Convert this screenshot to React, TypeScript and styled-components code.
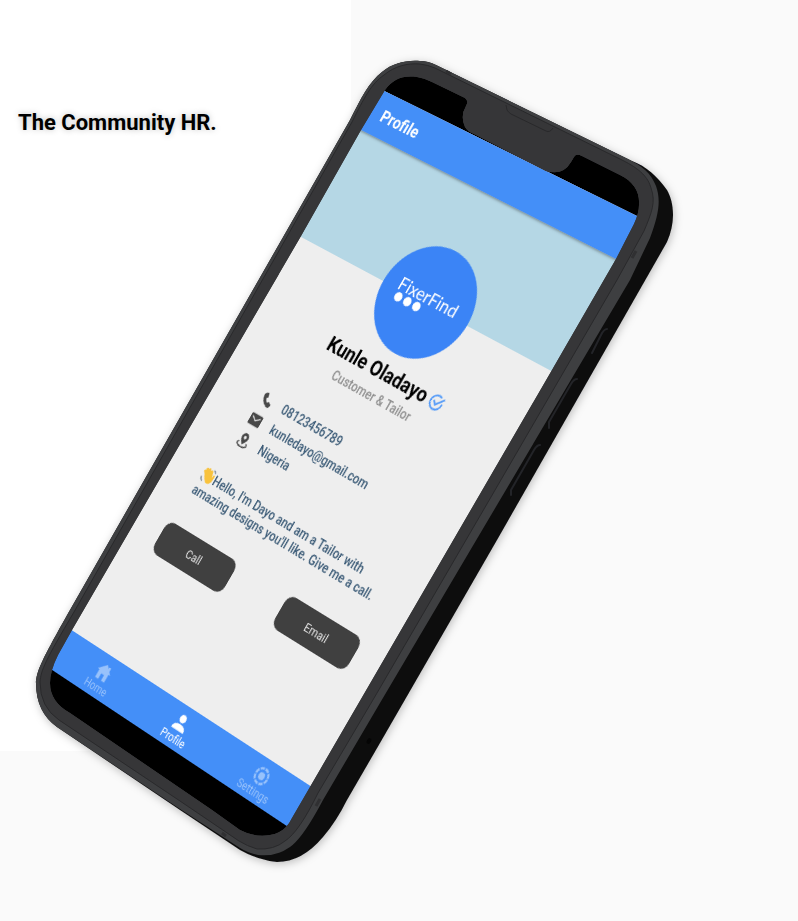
import React from "react";
import styled, { createGlobalStyle } from "styled-components";

type Point = [number, number];

const SCREEN_WIDTH = 366;
const EDGE = 10;
const HEADER_HEIGHT = 47;
const CONTENT_HEIGHT = 600;
const NAV_HEIGHT = 46;
const SCENE = { left: 24, top: 49, width: 664, height: 828 };

/* Projects a flat width x height rectangle onto four corners (clockwise from the
   top left); offsetY is the height of whatever sits above that rectangle. */
function project(width: number, height: number, offsetY: number, corners: Point[]): string {
  const [[x0, y0], [x1, y1], [x2, y2], [x3, y3]] = corners;
  const sx = x0 - x1 + x2 - x3;
  const sy = y0 - y1 + y2 - y3;
  const dx1 = x1 - x2;
  const dy1 = y1 - y2;
  const dx2 = x3 - x2;
  const dy2 = y3 - y2;
  const det = dx1 * dy2 - dx2 * dy1;
  const g = (sx * dy2 - dx2 * sy) / det;
  const h = (dx1 * sy - sx * dy1) / det;
  const a = (x1 - x0 + g * x1) / width;
  const d = (y1 - y0 + g * y1) / width;
  const b = (x3 - x0 + h * x3) / height;
  const e = (y3 - y0 + h * y3) / height;
  const m = [a, d, 0, g / width, b, e, 0, h / height, 0, 0, 1, 0, x0, y0, 0, 1];
  return `matrix3d(${m.map((v) => v.toFixed(8)).join(",")}) translateY(${-offsetY}px)`;
}

const toScene = ([x, y]: Point): Point => [x - SCENE.left, y - SCENE.top];

const perspective = project(
  SCREEN_WIDTH,
  CONTENT_HEIGHT,
  HEADER_HEIGHT + EDGE,
  ([[359, 129], [618, 260], [312, 787], [70, 629]] as Point[]).map(toScene)
);

const GlobalStyle = createGlobalStyle`
  *, *::before, *::after { box-sizing: border-box; }
  body {
    margin: 0;
    background: #fafafa;
    font-family: Roboto, "Liberation Sans", sans-serif;
  }
`;

const Page = styled.main`
  display: grid;
  grid-template-columns: 44fr 56fr;
  min-height: 100vh;
  overflow: hidden;
`;

const Intro = styled.section`
  grid-area: 1 / 1;
  align-self: start;
  min-height: 751px;
  padding: 108px 18px;
  background: #fff;
`;

const Title = styled.h1`
  margin: 0;
  font-size: 22px;
  line-height: 30px;
  font-weight: 700;
  color: #000;
  white-space: nowrap;
  text-shadow: 0 0 6px rgba(0, 0, 0, 0.25);
`;

const Scene = styled.div`
  grid-area: 1 / 1 / 2 / 3;
  position: relative;
  width: ${SCENE.width}px;
  height: ${SCENE.height}px;
  margin: ${SCENE.top}px 0 0 ${SCENE.left}px;
  pointer-events: none;
`;

const Layer = styled.svg`
  position: absolute;
  inset: 0;
  width: 100%;
  height: 100%;
`;

const Screen = styled.div`
  position: absolute;
  top: 0;
  left: 0;
  width: ${SCREEN_WIDTH}px;
  display: grid;
  grid-template-rows: ${HEADER_HEIGHT}px ${CONTENT_HEIGHT}px ${NAV_HEIGHT}px;
  border: solid #000;
  border-width: ${EDGE}px 0;
  transform-origin: 0 0;
  transform: ${perspective};
  background: #eee;
  pointer-events: auto;
`;

const AppBar = styled.header`
  z-index: 1;
  display: flex;
  align-items: center;
  padding: 0 17px;
  background: #448ff8;
  box-shadow: 0 1px 3px rgba(0, 0, 0, 0.4);
`;

const AppTitle = styled.h2`
  margin: 0;
  font-size: 18px;
  line-height: 24px;
  font-weight: 700;
  color: #fff;
`;

const Content = styled.section`
  display: flex;
  flex-direction: column;
  align-items: center;
  padding-left: 8px;
  background: linear-gradient(#b5d7e5 127px, #eee 127px);
`;

const Avatar = styled.div`
  display: flex;
  flex-direction: column;
  align-items: center;
  width: 120px;
  height: 120px;
  margin-top: 66px;
  padding-top: 43px;
  border-radius: 50%;
  background: #3b84f6;
`;

const Wordmark = styled.span`
  font-family: Lato, sans-serif;
  font-size: 20px;
  line-height: 20px;
  color: #fff;
`;

const Dots = styled.svg`
  width: 80px;
  height: 12px;
`;

const NameRow = styled.div`
  display: flex;
  align-items: center;
  gap: 4px;
  margin-top: 9px;
  padding-left: 4px;
`;

const Name = styled.h3`
  margin: 0;
  font-size: 22px;
  line-height: 28px;
  font-weight: 700;
  color: #000;
`;

const Role = styled.p`
  margin: 2px 0 0;
  font-size: 14px;
  line-height: 20px;
  font-weight: 500;
  color: #8e8e8e;
`;

const Contacts = styled.ul`
  align-self: stretch;
  list-style: none;
  margin: 34px 0 0;
  padding: 0 0 0 58px;
`;

const Contact = styled.li`
  display: flex;
  align-items: center;
  gap: 15px;
  height: 24px;
  font-size: 14px;
  font-weight: 500;
  color: #3a5a76;
`;

const ContactLink = styled.a`
  color: inherit;
  text-decoration: none;
`;

const Icon = styled.svg<{ $size: number }>`
  flex: none;
  width: ${(p) => p.$size}px;
  height: ${(p) => p.$size}px;
`;

const Bio = styled.p`
  align-self: flex-start;
  width: 290px;
  margin: 29px 0 0 40px;
  font-size: 14px;
  line-height: 18px;
  font-weight: 500;
  color: #3a5a76;
`;

const Wave = styled.svg`
  width: 18px;
  height: 18px;
  vertical-align: -3px;
`;

const Actions = styled.div`
  display: flex;
  gap: 75px;
  margin-top: 32px;
  padding-right: 4px;
`;

const Action = styled.button`
  width: 107px;
  height: 38px;
  border: 0;
  border-radius: 10px;
  background: #404040;
  font: 400 13px Roboto, sans-serif;
  color: #e4e4e4;
`;

const TabBar = styled.nav`
  display: grid;
  grid-template-columns: repeat(3, 1fr);
  padding-left: 8px;
  background: #448ff8;
`;

const Tab = styled.a<{ $active?: boolean }>`
  display: flex;
  flex-direction: column;
  align-items: center;
  padding-top: 8px;
  font-size: 12px;
  line-height: 14px;
  text-decoration: none;
  color: ${(p) => (p.$active ? "#fff" : "#98c2fb")};
`;

const BODY =
  "M350 120 C361 98 369 82 382 72 C393 63 406 60 420 61 Q428 61 436 65 L632 161 C646 166 658 177 667 190 C674 202 676 222 667 242 L497 540 L380 743 L347 800 Q336 822 323 837 Q302 862 277 862 Q258 860 240 850 L180 810 L57 727 Q36 712 36 683 C37 671 40 663 70 610 Z";
const FACE =
  "M350 120 C361 98 369 82 382 72 C393 63 406 60 420 61 Q428 61 436 65 L628 159 C642 166 651 173 656 186 C661 200 659 214 650 238 L630 280 L497 505 L380 703 L323 800 Q303 838 290 847 Q276 857 258 855 Q248 853 240 848 L180 809 L57 727 Q36 712 36 683 C37 671 40 663 70 610 Z";
const SEAM =
  "M352 122 C364 98 371 84 384 75 C395 66 407 63 420 64 Q428 65 435 68 L622 160 C640 169 648 177 651 188 C656 202 652 212 644 231 L617 280 L491 497 L377 693 L318 793 Q299 832 285 841 Q274 850 257 849 Q247 846 239 841 L180 801 L59 720 Q40 707 40 682 C41 670 45 661 74 612 Z";
const GLASS =
  "M361 130 L385 90 C393 79 403 75 417 77 Q424 78 432 82 L465 98 Q469 101 466 106 Q460 116 465 127 Q468 132 474 134 L546 171 Q563 176 571 162 L574 157 Q576 153 582 156 L620 175 C634 182 640 192 639 205 Q639 213 634 224 L616 259 L552 370 L310 787 L292 818 Q285 833 270 835 Q256 838 240 830 L212 810 L70 713 Q50 702 50 683 Q50 671 58 655 L72 630 L301 236 Z";

function PhoneBody() {
  return (
    <Layer viewBox={`${SCENE.left} ${SCENE.top} ${SCENE.width} ${SCENE.height}`} aria-hidden>
      <defs>
        <filter id="soft" x="-10%" y="-10%" width="120%" height="120%">
          <feDropShadow dx="1" dy="2" stdDeviation="4" floodColor="#000" floodOpacity="0.25" />
        </filter>
      </defs>
      <path d={BODY} fill="#0c0c0d" filter="url(#soft)" />
      <path d={GLASS} fill="#000" />
      <g stroke="#232428" strokeWidth="2" strokeLinecap="round" fill="none">
        <path d="M607 329 Q604 329 601 335 L592 353" />
        <path d="M577 379 Q574 379 571 384 L549 422 V428" />
        <path d="M540 445 Q537 445 534 450 L511 490 V495" />
      </g>
      <ellipse cx="369" cy="741" rx="2" ry="3" fill="#050505" transform="rotate(30 369 741)" />
    </Layer>
  );
}

function PhoneBezel() {
  return (
    <Layer viewBox={`${SCENE.left} ${SCENE.top} ${SCENE.width} ${SCENE.height}`} aria-hidden>
      <path d={`${FACE} ${GLASS}`} fill="#3e3f41" fillRule="evenodd" />
      <path d={`${SEAM} ${GLASS}`} fill="#363638" fillRule="evenodd" />
      <path d={SEAM} fill="none" stroke="#29292b" strokeWidth="1" />
      <path d="M506 105 L507 110 Q508 112 511 114 L546 131 Q550 133 553 128" fill="none" stroke="#29292b" />
      <path d="M446 71 l5 3 M636 251 l-4 7 M320 799 l-4 7 M222 833 l4 3" stroke="#303032" strokeWidth="3" />
    </Layer>
  );
}

export default function App() {
  return (
    <>
      <GlobalStyle />
      <Page>
        <Intro>
          <Title>The Community HR.</Title>
        </Intro>
        <Scene>
          <PhoneBody />
          <Screen>
            <AppBar>
              <AppTitle>Profile</AppTitle>
            </AppBar>
            <Content>
              <Avatar>
                <Wordmark>FixerFind</Wordmark>
                <Dots viewBox="0 0 80 12" fill="#fff" aria-hidden>
                  <circle cx="7" cy="5" r="5" />
                  <circle cx="20" cy="5" r="5" />
                  <circle cx="33" cy="5" r="5" />
                </Dots>
              </Avatar>
              <NameRow>
                <Name>Kunle Oladayo</Name>
                <Icon $size={20} viewBox="0 0 24 24" fill="none" stroke="#559bf8" strokeWidth="2.4" aria-hidden>
                  <path d="M20.5 11 A9 9 0 1 1 16 4.3" />
                  <path d="M7 10.5 L11.5 15 L21.5 4.5" />
                </Icon>
              </NameRow>
              <Role>Customer &amp; Tailor</Role>
              <Contacts>
                <Contact>
                  <Icon $size={16} viewBox="0 0 24 24" fill="#484848" aria-hidden>
                    <path d="M6.6 1.5 L9.5 1.2 L12 7.8 L9 10 Q11 14 14.5 16 L17 13.5 L23 16.5 L22 20.5 Q20 23.5 16 22.5 Q4 18 2.5 6.5 Q3 3 6.6 1.5Z" />
                  </Icon>
                  <ContactLink href="tel:08123456789">08123456789</ContactLink>
                </Contact>
                <Contact>
                  <Icon $size={16} viewBox="0 0 24 24" aria-hidden>
                    <rect x="0" y="2.5" width="24" height="19" rx="2" fill="#484848" />
                    <path d="M3.5 7 L12 13.2 L20.5 7" fill="none" stroke="#eee" strokeWidth="1.8" />
                  </Icon>
                  <ContactLink href="mailto:kunledayo@gmail.com">kunledayo@gmail.com</ContactLink>
                </Contact>
                <Contact>
                  <Icon $size={16} viewBox="0 0 24 24" aria-hidden>
                    <path
                      d="M12 0 A7.2 7.2 0 0 0 4.8 7.2 C4.8 12 12 19 12 19 C12 19 19.2 12 19.2 7.2 A7.2 7.2 0 0 0 12 0 Z M12 4.4 A2.8 2.8 0 1 1 12 10 A2.8 2.8 0 0 1 12 4.4 Z"
                      fill="#484848"
                      fillRule="evenodd"
                    />
                    <path d="M5 15.5 Q1.5 17 2 19.5 Q5 23 12 23 Q19 23 22 19.5 Q22.5 17 19 15.5" fill="none" stroke="#484848" strokeWidth="2" />
                  </Icon>
                  Nigeria
                </Contact>
              </Contacts>
              <Bio>
                <Wave viewBox="0 0 24 24" role="img" aria-label="Waving hand">
                  <g stroke="#f8c23c" strokeLinecap="round" strokeWidth="4.4">
                    <path d="M11 15 L3.5 8.5 M12 12 L5.5 4.8 M14 11 L9.5 3.8 M17 12 L14.5 5" />
                  </g>
                  <path d="M5 12.5 L11 8 L17 8.5 L19.5 12 L20 7.5 Q23 7 23 10 L22 17.5 Q19 23.5 14 22.5 Q9 20 5 12.5Z" fill="#f8c23c" />
                  <path d="M1.5 17 Q2.5 21 6.5 22.5 M17 1.5 Q20.5 2 21.5 5" stroke="#7a8893" strokeWidth="2" fill="none" />
                </Wave>
                Hello, I'm Dayo and am a Tailor with
                <br />
                amazing designs you'll like. Give me a call.
              </Bio>
              <Actions>
                <Action type="button">Call</Action>
                <Action type="button">Email</Action>
              </Actions>
            </Content>
            <TabBar>
              <Tab href="#home">
                <Icon $size={21} viewBox="0 0 24 24" fill="currentColor" aria-hidden>
                  <path d="M12 2 L1 11.5 H4 V22 H9.5 V14.5 H14.5 V22 H20 V11.5 H23 L19 8 V3.5 H16 V5.4Z" />
                </Icon>
                Home
              </Tab>
              <Tab href="#profile" $active>
                <Icon $size={21} viewBox="0 0 24 24" fill="currentColor" aria-hidden>
                  <circle cx="12" cy="6.8" r="5" />
                  <path d="M2 21.5 Q2 13.5 12 13.5 Q22 13.5 22 21.5 Z" />
                </Icon>
                Profile
              </Tab>
              <Tab href="#settings">
                <Icon $size={21} viewBox="0 0 24 24" fill="none" stroke="currentColor" aria-hidden>
                  <circle cx="12" cy="12" r="9.3" strokeWidth="3" strokeDasharray="5.8 1.5" />
                  <circle cx="12" cy="12" r="4.6" fill="currentColor" stroke="none" />
                </Icon>
                Settings
              </Tab>
            </TabBar>
          </Screen>
          <PhoneBezel />
        </Scene>
      </Page>
    </>
  );
}
